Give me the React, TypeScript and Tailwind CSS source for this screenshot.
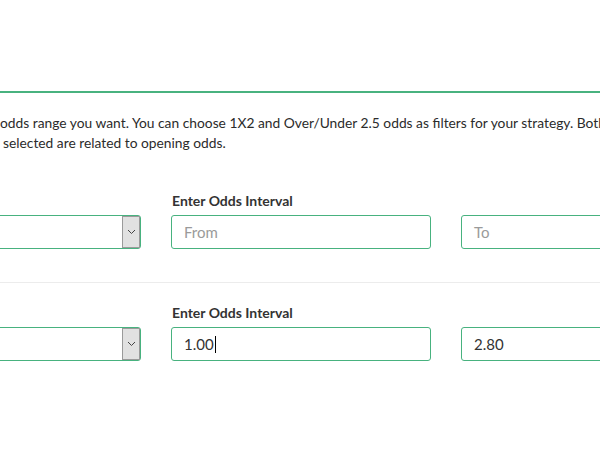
import React from 'react';

const font = { fontFamily: 'Lato, "Open Sans", sans-serif' };

function SelectBox() {
  return (
    <div className="flex h-[34px] w-full items-stretch rounded-[3px] border border-[#48b27f] bg-white">
      <div className="flex-1" />
      <div className="flex w-[18px] items-center justify-center border border-[#9a9a9a] bg-[#e1e1e1]">
        <svg width="9" height="6" viewBox="0 0 9 6" fill="none">
          <path d="M1 1l3.5 3.5L8 1" stroke="#444" strokeWidth="1" />
        </svg>
      </div>
    </div>
  );
}

function Field({ value, placeholder, caret }: { value?: string; placeholder?: string; caret?: boolean }) {
  return (
    <div className="flex h-[34px] w-full items-center rounded-[3px] border border-[#48b27f] bg-white px-[12px] text-[15px]">
      {value ? (
        <span className="text-[#333]">{value}</span>
      ) : (
        <span className="text-[#9a9a9a]">{placeholder}</span>
      )}
      {caret && <span className="ml-[1px] inline-block h-[17px] w-px bg-black" />}
    </div>
  );
}

function OddsRow({ from, to, caret }: { from?: string; to?: string; caret?: boolean }) {
  return (
    <div className="grid grid-cols-[260px_260px_260px] gap-x-[30px]">
      <div className="flex flex-col">
        <div className="h-[22px]" />
        <SelectBox />
      </div>
      <div className="flex flex-col">
        <label className="h-[22px] pl-[1px] text-[14px] font-bold text-[#333] leading-[16px]">Enter Odds Interval</label>
        <Field value={from} placeholder="From" caret={caret} />
      </div>
      <div className="flex flex-col">
        <div className="h-[22px]" />
        <Field value={to} placeholder="To" />
      </div>
    </div>
  );
}

export default function App() {
  return (
    <div className="h-[469px] w-[600px] overflow-hidden bg-white" style={font}>
      <div className="pt-[91px]">
        <div className="h-[2px] w-full bg-[#48b27f]" />
        <div className="pt-[20px] text-[13.8px] leading-[20px] text-[#2b2b2b] whitespace-nowrap">
          <p>odds range you want. You can choose 1X2 and Over/Under 2.5 odds as filters for your strategy. Both c</p>
          <p className="pl-[3px]">selected are related to opening odds.</p>
        </div>

        <div className="ml-[-119px] w-[900px] pt-[40px]">
          <OddsRow />
        </div>
        <div className="mt-[33px] h-px w-full bg-[#ececec]" />
        <div className="ml-[-119px] w-[900px] pt-[22px]">
          <OddsRow from="1.00" to="2.80" caret />
        </div>
      </div>
    </div>
  );
}
